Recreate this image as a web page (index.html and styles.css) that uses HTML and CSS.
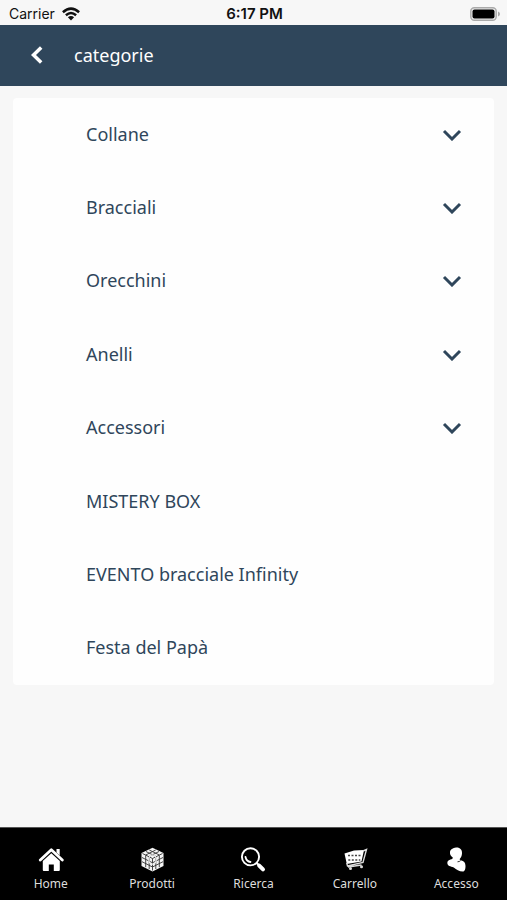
FILE: index.html
```html
<!DOCTYPE html>
<html lang="it">
<head>
<meta charset="utf-8">
<meta name="viewport" content="width=device-width, initial-scale=1">
<title>categorie</title>
<link rel="stylesheet" href="styles.css">
</head>
<body>
<div class="status">
  <div class="carrier">
    <span>Carrier</span>
    <svg class="wifi" viewBox="0 0 18 14" aria-hidden="true">
      <g fill="none" stroke="#111" stroke-width="2.5">
        <path d="M.9 5.200Q9-2 17.100 5.200"/>
        <path d="M3.900 8.300Q9 3.800 14.100 8.300"/>
      </g>
      <path d="M5.900 10.200Q9 7.700 12.100 10.200L9 13.500z" fill="#111"/>
    </svg>
  </div>
  <div class="clock">6:17 PM</div>
  <svg class="battery" viewBox="0 0 30 14" aria-hidden="true">
    <rect x=".8" y=".8" width="25.400" height="12.400" rx="3.500" fill="#eee" stroke="#aaa" stroke-width="1.400"/>
    <rect x="2.500" y="2.500" width="22" height="9" rx="2" fill="#000"/>
    <path d="M28 4.500q2 .8 2 2.500t-2 2.500z" fill="#aaa"/>
  </svg>
</div>
<header class="header">
  <button class="back" type="button" aria-label="Indietro">
    <svg viewBox="0 0 12 18" aria-hidden="true"><path d="M10.200 1.500L2.500 9l7.700 7.500" fill="none" stroke="#fff" stroke-width="3.500"/></svg>
  </button>
  <h1 class="title">categorie</h1>
</header>
<main class="main">
  <ul class="list">
    <li class="item"><button class="row" type="button"><span>Collane</span><svg class="chevron" viewBox="0 0 20 12" aria-hidden="true"><path d="M2 2l8 8 8-8"/></svg></button></li>
    <li class="item"><button class="row" type="button"><span>Bracciali</span><svg class="chevron" viewBox="0 0 20 12" aria-hidden="true"><path d="M2 2l8 8 8-8"/></svg></button></li>
    <li class="item"><button class="row" type="button"><span>Orecchini</span><svg class="chevron" viewBox="0 0 20 12" aria-hidden="true"><path d="M2 2l8 8 8-8"/></svg></button></li>
    <li class="item"><button class="row" type="button"><span>Anelli</span><svg class="chevron" viewBox="0 0 20 12" aria-hidden="true"><path d="M2 2l8 8 8-8"/></svg></button></li>
    <li class="item"><button class="row" type="button"><span>Accessori</span><svg class="chevron" viewBox="0 0 20 12" aria-hidden="true"><path d="M2 2l8 8 8-8"/></svg></button></li>
    <li class="item"><a class="row" href="#mistery-box"><span>MISTERY BOX</span></a></li>
    <li class="item"><a class="row" href="#evento"><span>EVENTO bracciale Infinity</span></a></li>
    <li class="item"><a class="row" href="#festa"><span>Festa del Papà</span></a></li>
  </ul>
</main>
<nav class="tabs">
  <a class="tab" href="#home">
    <svg class="icon" viewBox="0 0 26 26" aria-hidden="true">
      <path d="M2.300 13L13.300 2.800 24.300 13" fill="none" stroke="#fff" stroke-width="2.800" stroke-linecap="round" stroke-linejoin="round"/>
      <path d="M18.500 2h3.200v6.500l-3.200-3z" fill="#fff"/>
      <path d="M4.800 14L13.300 6.300l8.500 7.700v9q0 1-1 1H15.800v-6.500h-5v6.500h-5q-1 0-1-1z" fill="#fff"/>
    </svg>
    <span>Home</span>
  </a>
  <a class="tab" href="#prodotti">
    <svg class="icon" viewBox="0 0 26 26" aria-hidden="true">
      <path d="M13.500.7L24.500 6v13l-11 5.500L2.500 19V6z" fill="#f4f4f4"/>
      <g fill="none" stroke="#333" stroke-width=".9">
        <path d="M3.500 6.500l10 5 10-5M13.500 11.500v12M6.700 8.500v11.700M10.200 10v12M16.800 10v12M20.300 8.500v11.700M3 10.500l10.500 5.300L24 10.500M3 14.700l10.500 5.300L24 14.700M7 4.500l10 5M10.300 3l10 5M20 4.500l-10 5M16.700 3l-10 5"/>
      </g>
      <ellipse cx="13.500" cy="12.500" rx="3.700" ry="4.700" fill="none" stroke="#eee" stroke-width="1.300"/>
    </svg>
    <span>Prodotti</span>
  </a>
  <a class="tab" href="#ricerca">
    <svg class="icon" viewBox="0 0 26 26" aria-hidden="true">
      <g fill="none" stroke="#fff" stroke-linecap="round">
        <circle cx="10.500" cy="9.800" r="8.600" stroke-width="1.900"/>
        <path d="M5.500 10q1 4.500 5 5" stroke-width="1.800"/>
        <path d="M16.700 16l2 2" stroke-width="2"/>
        <path d="M19.200 18.600l3.800 3.800" stroke-width="4"/>
      </g>
    </svg>
    <span>Ricerca</span>
  </a>
  <a class="tab" href="#carrello">
    <svg class="icon" viewBox="0 0 26 26" aria-hidden="true">
      <path d="M2.500 6.500L12 3.500l10-.5-2.500 11.500L4.800 17z" fill="#fff"/>
      <path d="M21 4l3.500-1.500L21 15.500 5.500 19l-.8-3M6 20l13.500-2" fill="none" stroke="#ddd" stroke-width="1.400"/>
      <path d="M6 8.500h13M6.300 13h12" fill="none" stroke="#444" stroke-width="1.500" stroke-dasharray="2 1.500"/>
      <circle cx="8.500" cy="21.500" r="1.500" fill="#ddd"/><circle cx="19.500" cy="19.700" r="1.500" fill="#ddd"/>
    </svg>
    <span>Carrello</span>
  </a>
  <a class="tab" href="#accesso">
    <svg class="icon" viewBox="0 0 26 26" aria-hidden="true">
      <path d="M13 .5C17 .2 19.300 2.800 19 6.500c-.2 2.500-1 4.200-2.500 5.800l1.300 1c3 .7 4.700 2.200 4.700 5.700 0 3-.7 5.500-2.700 5.500-3.700 0-6.500-2-9-4-3.300-1.300-6.500-1.500-6.500-4.800 0-2.200 2.500-3.200 5-3.700l.5-1.500C7.500 9 6.800 7 7 5 7.300 2.500 10 .8 13 .5z" fill="#fff"/>
      <path d="M14.500 14.800q2 0 3.200-1.300" fill="none" stroke="#000" stroke-width=".8"/>
    </svg>
    <span>Accesso</span>
  </a>
</nav>
</body>
</html>
```

FILE: styles.css
```css
* {
  box-sizing: border-box;
}

body {
  margin: 0;
  min-height: 100vh;
  display: flex;
  flex-direction: column;
  background: #f7f7f7;
  color: #2f465b;
  font-family: "Noto Sans", "Open Sans", sans-serif;
}

.status {
  display: grid;
  grid-template-columns: 1fr auto 1fr;
  align-items: center;
  height: 25px;
  padding: 2px 7px 0 9px;
  color: #111;
  font: 14px/16px Inter, sans-serif;
}

.carrier {
  display: flex;
  align-items: center;
  gap: 7px;
}

.wifi {
  width: 18px;
  height: 14px;
}

.clock {
  font-size: 15px;
  font-weight: 600;
}

.battery {
  width: 30px;
  height: 14px;
  justify-self: end;
}

.header {
  display: flex;
  align-items: center;
  height: 61px;
  padding: 0 20px 2px;
  background: #2f465b;
  color: #fff;
}

.back {
  display: flex;
  justify-content: center;
  width: 34px;
  margin-right: 20px;
  padding: 8px 0;
  border: 0;
  background: none;
}

.back svg {
  width: 12px;
  height: 18px;
}

.title {
  margin: 0;
  font-size: 18px;
  font-weight: 400;
  line-height: 24px;
}

.main {
  flex: 1;
  display: flex;
  padding: 12px 13px 142px;
}

.list {
  flex: 1;
  display: flex;
  flex-direction: column;
  margin: 0;
  padding: 0;
  border-radius: 4px;
  background: #fefefe;
  list-style: none;
}

.item {
  flex: 1;
  display: flex;
}

.row {
  flex: 1;
  display: flex;
  align-items: center;
  justify-content: space-between;
  padding: 0 32px 0 73px;
  border: 0;
  background: none;
  color: inherit;
  font: inherit;
  font-size: 18px;
  line-height: 24px;
  text-align: left;
  text-decoration: none;
}

.row span {
  padding-bottom: 2px;
}

.chevron {
  width: 20px;
  height: 12px;
  fill: none;
  stroke: #2f465b;
  stroke-width: 3;
}

.tabs {
  display: grid;
  grid-template-columns: repeat(5, 1fr);
  height: 73px;
  border-top: 1px solid #555;
  background: #000;
}

.tab {
  display: flex;
  flex-direction: column;
  align-items: center;
  gap: 3px;
  padding-top: 19px;
  color: #ddd;
  font-size: 12px;
  line-height: 16px;
  text-decoration: none;
}

.icon {
  width: 26px;
  height: 26px;
}
```
